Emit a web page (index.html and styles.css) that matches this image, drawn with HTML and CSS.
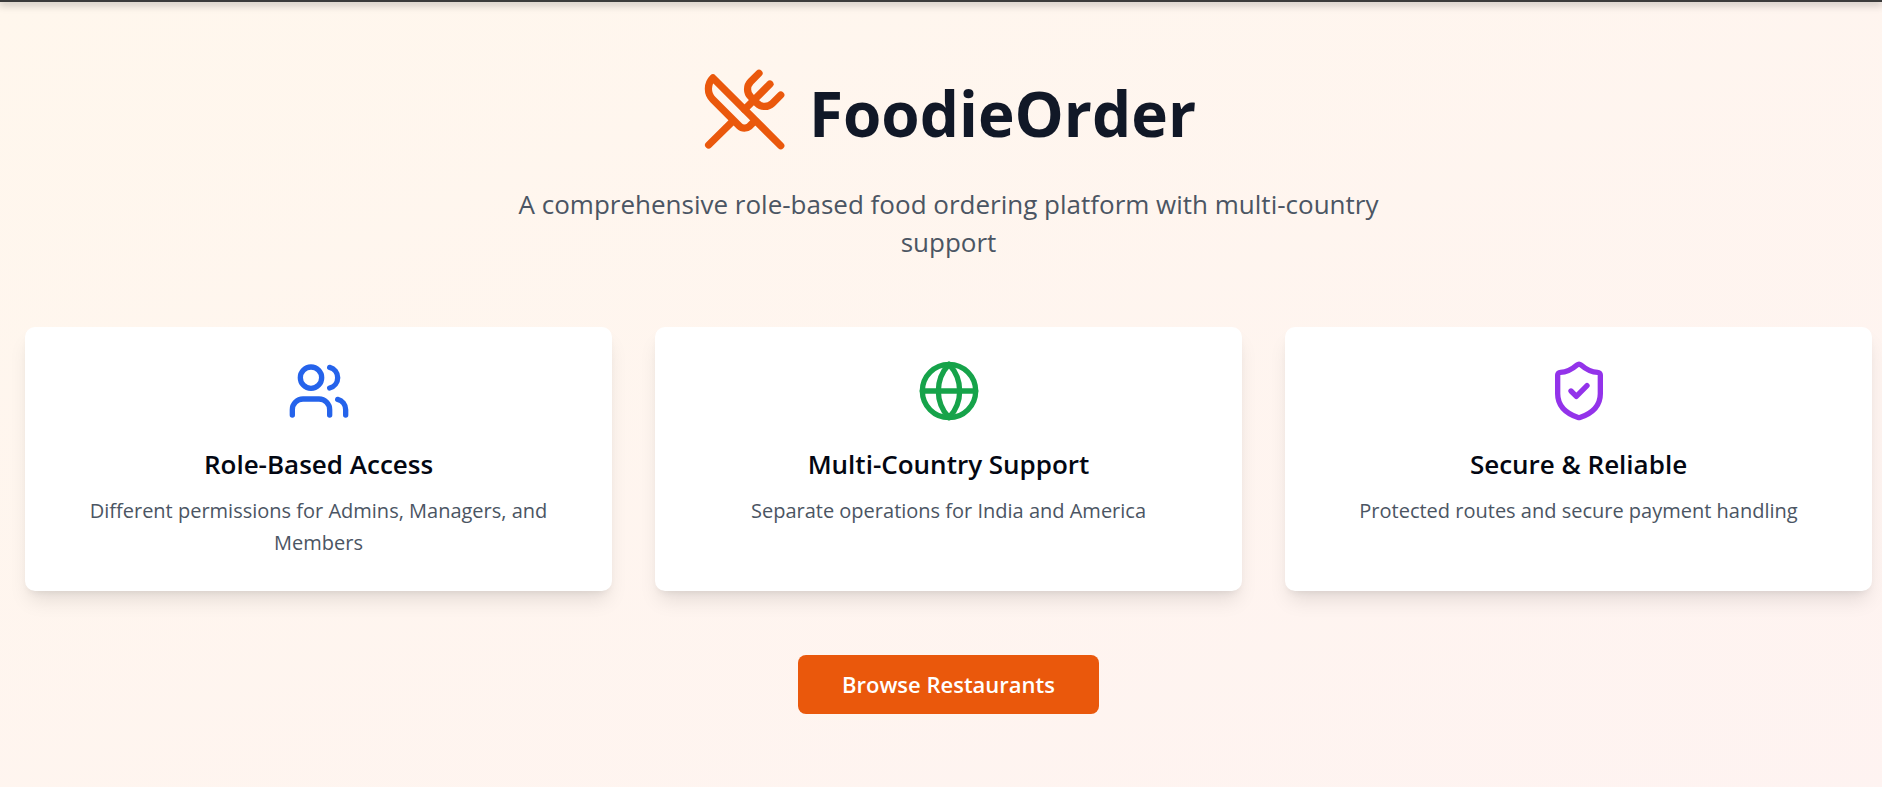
FILE: index.html
```html
<!DOCTYPE html>
<html lang="en">
<head>
<meta charset="utf-8">
<meta name="viewport" content="width=device-width, initial-scale=1">
<title>FoodieOrder</title>
<link rel="stylesheet" href="styles.css">
</head>
<body>
<div class="topbar"></div>
<main class="page">
  <header class="hero">
    <div class="brand">
      <svg class="brand-icon icon" viewBox="0 0 24 24" aria-hidden="true">
        <path d="m16 2-2.3 2.3a3 3 0 0 0 0 4.2l1.8 1.8a3 3 0 0 0 4.2 0L22 8"/>
        <path d="M15 15 3.3 3.3a4.2 4.2 0 0 0 0 6l7.3 7.3c.7.7 2 .7 2.8 0L15 15Zm0 0 7 7"/>
        <path d="m2.1 21.8 6.4-6.3"/>
        <path d="m19 5-7 7"/>
      </svg>
      <h1 class="brand-name">FoodieOrder</h1>
    </div>
    <p class="tagline">A comprehensive role-based food ordering platform with multi-country support</p>
  </header>
  <section class="features">
    <article class="card">
      <svg class="card-icon icon blue" viewBox="0 0 24 24" aria-hidden="true">
        <path d="M16 21v-2a4 4 0 0 0-4-4H6a4 4 0 0 0-4 4v2"/>
        <circle cx="9" cy="7" r="4"/>
        <path d="M22 21v-2a4 4 0 0 0-3-3.87"/>
        <path d="M16 3.13a4 4 0 0 1 0 7.75"/>
      </svg>
      <h2 class="card-title">Role-Based Access</h2>
      <p class="card-text">Different permissions for Admins, Managers, and Members</p>
    </article>
    <article class="card">
      <svg class="card-icon icon green" viewBox="0 0 24 24" aria-hidden="true">
        <circle cx="12" cy="12" r="10"/>
        <path d="M12 2a14.5 14.5 0 0 0 0 20 14.5 14.5 0 0 0 0-20"/>
        <path d="M2 12h20"/>
      </svg>
      <h2 class="card-title">Multi-Country Support</h2>
      <p class="card-text">Separate operations for India and America</p>
    </article>
    <article class="card">
      <svg class="card-icon icon purple" viewBox="0 0 24 24" aria-hidden="true">
        <path d="M20 13c0 5-3.5 7.5-7.66 8.95a1 1 0 0 1-.67-.01C7.5 20.5 4 18 4 13V6a1 1 0 0 1 1-1c2 0 4.5-1.2 6.24-2.72a1.17 1.17 0 0 1 1.52 0C14.51 3.81 17 5 19 5a1 1 0 0 1 1 1z"/>
        <path d="m9 12 2 2 4-4"/>
      </svg>
      <h2 class="card-title">Secure &amp; Reliable</h2>
      <p class="card-text">Protected routes and secure payment handling</p>
    </article>
  </section>
  <div class="actions">
    <button class="browse" type="button">Browse Restaurants</button>
  </div>
</main>
</body>
</html>
```
FILE: styles.css
```css
* {
  box-sizing: border-box;
}

body {
  margin: 0;
  min-height: 100vh;
  font-family: "Open Sans", "Noto Sans", sans-serif;
  color: #030712;
  background: linear-gradient(to bottom right, #fff7ed, #fef2f2 125%);
}

h1, h2, p {
  margin: 0;
}

.topbar {
  height: 2px;
  background: #3b3b3b;
  box-shadow: 0 1px 8px 1px rgba(0, 0, 0, 0.35);
}

.page {
  padding: 64px 10px 64px 25px;
}

.icon {
  fill: none;
  stroke: currentColor;
  stroke-width: 2;
  stroke-linecap: round;
  stroke-linejoin: round;
}

.hero {
  text-align: center;
}

.brand {
  display: flex;
  align-items: center;
  justify-content: center;
  gap: 21px;
}

.brand-icon {
  width: 87px;
  height: 87px;
  color: #ea580c;
}

.brand-name {
  padding-top: 6px;
  font-size: 62px;
  line-height: 80px;
  font-weight: 700;
  color: #111827;
}

.tagline {
  max-width: 896px;
  margin: 32px auto 0;
  font-size: 26px;
  line-height: 38px;
  color: #4b5563;
}

.features {
  display: grid;
  grid-template-columns: repeat(3, 1fr);
  gap: 43px;
  margin-top: 66px;
}

.card {
  padding: 32px;
  border-radius: 10px;
  background: #ffffff;
  text-align: center;
  box-shadow: 0 13px 20px -4px rgba(0, 0, 0, 0.1), 0 5px 8px -5px rgba(0, 0, 0, 0.1);
}

.card-icon {
  display: block;
  width: 64px;
  height: 64px;
  margin: 0 auto 22px;
}

.blue {
  color: #2563eb;
}

.green {
  color: #16a34a;
}

.purple {
  color: #9333ea;
}

.card-title {
  margin-bottom: 12px;
  font-size: 26px;
  line-height: 38px;
  font-weight: 600;
}

.card-text {
  font-size: 20px;
  line-height: 32px;
  color: #4b5563;
}

.actions {
  display: flex;
  justify-content: center;
  margin-top: 64px;
}

.browse {
  padding: 12px 44px;
  border: 0;
  border-radius: 8px;
  background: #ea580c;
  color: #ffffff;
  font: 600 22px/35px "Open Sans", "Noto Sans", sans-serif;
  cursor: pointer;
}
```
